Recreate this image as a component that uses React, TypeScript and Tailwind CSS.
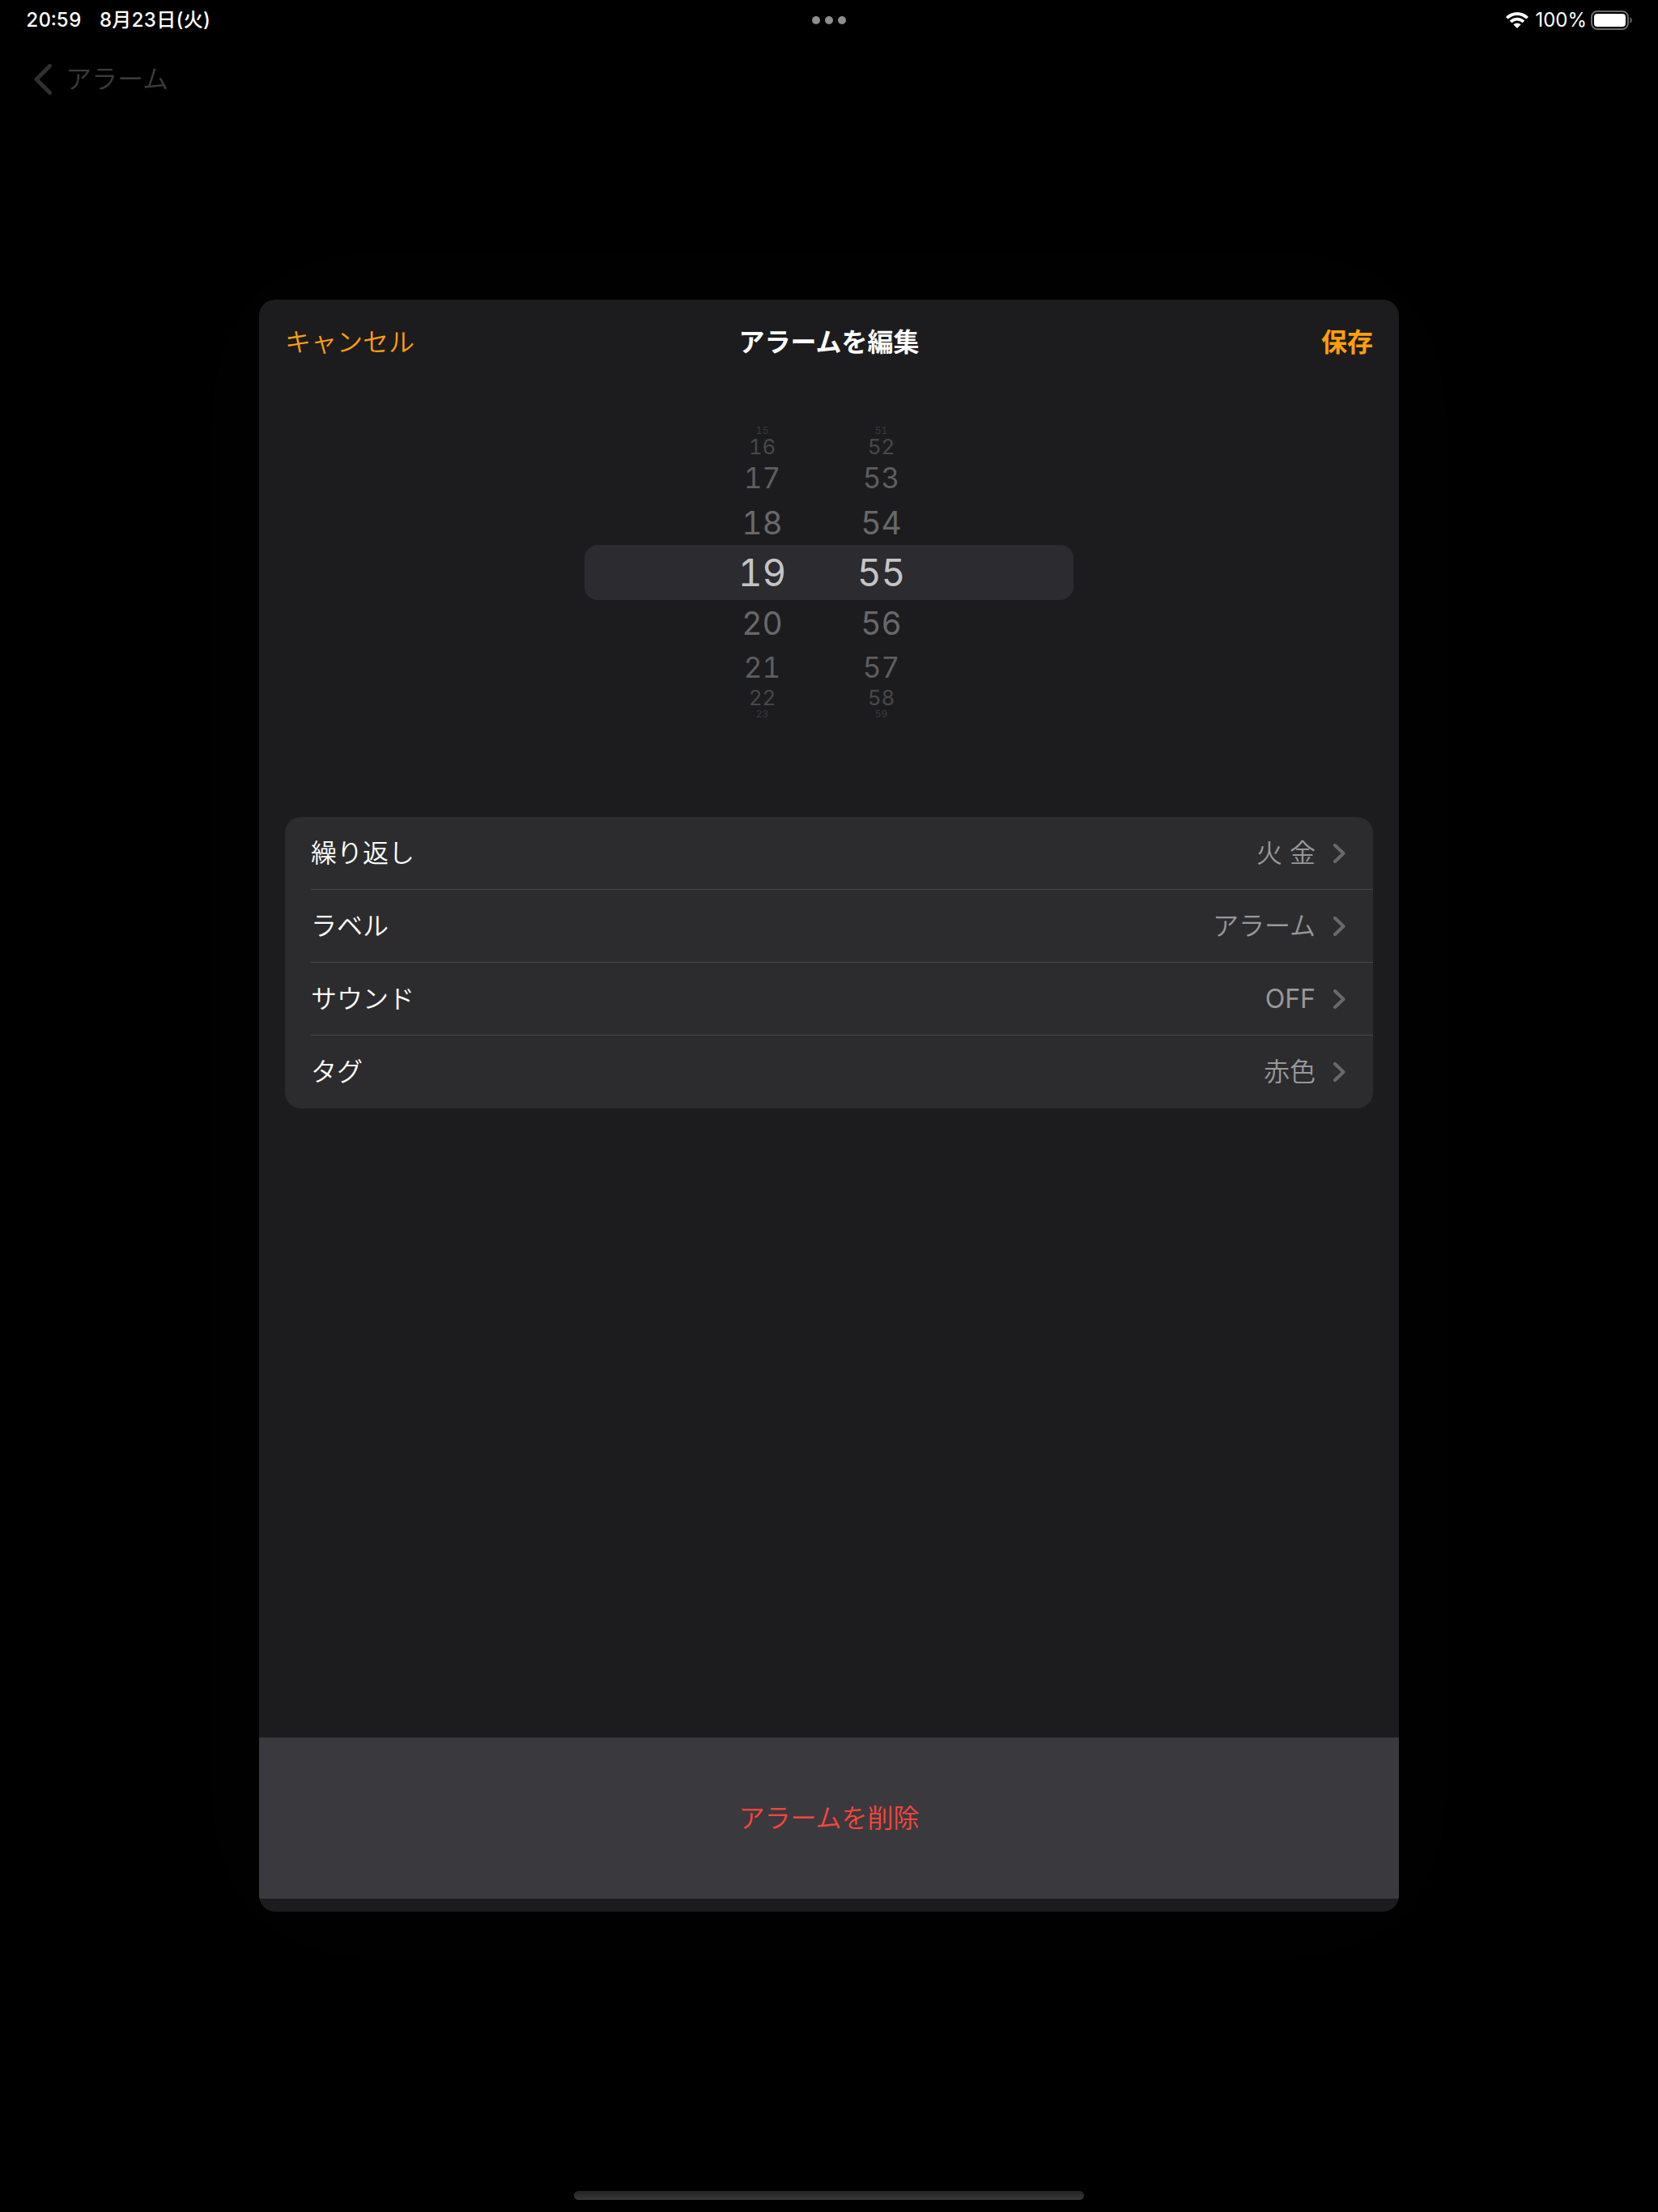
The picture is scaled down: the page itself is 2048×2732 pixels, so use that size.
import React from "react";

type Tier = { row: string; text: string };

const TIERS: Tier[] = [
  { row: "h-[12px] mb-[3px]", text: "text-[12px] text-[#39393b]" },
  { row: "h-[22px]", text: "text-[26px] text-[#48484a]" },
  { row: "h-[54px]", text: "text-[35px] text-[#5e5e60]" },
  { row: "h-[56px]", text: "text-[39px] text-[#68686b]" },
  { row: "h-[68px]", text: "text-[46px] text-[#c4c4c6]" },
  { row: "h-[56px]", text: "text-[39px] text-[#68686b]" },
  { row: "h-[54px]", text: "text-[35px] text-[#5e5e60]" },
  { row: "h-[22px]", text: "text-[26px] text-[#48484a]" },
  { row: "h-[12px] mt-[3px]", text: "text-[12px] text-[#39393b]" },
];

const HOURS = [15, 16, 17, 18, 19, 20, 21, 22, 23];
const MINUTES = [51, 52, 53, 54, 55, 56, 57, 58, 59];

const SETTINGS = [
  { label: "繰り返し", value: "火 金" },
  { label: "ラベル", value: "アラーム" },
  { label: "サウンド", value: "OFF" },
  { label: "タグ", value: "赤色" },
];

function Wheel({ name, values }: { name: string; values: number[] }) {
  return (
    <div role="listbox" aria-label={name} className="flex w-[94px] flex-col tabular-nums">
      {values.map((v, i) => (
        <button
          key={v}
          type="button"
          role="option"
          aria-selected={i === 4}
          className={`flex items-center justify-center leading-none ${TIERS[i].row} ${TIERS[i].text}`}
        >
          {v}
        </button>
      ))}
    </div>
  );
}

function StatusBar() {
  return (
    <header className="grid h-[50px] grid-cols-3 items-center px-8 text-[24px] leading-none font-medium text-white">
      <div className="flex items-center gap-[22px] tabular-nums">
        <span>20:59</span>
        <span>8月23日(火)</span>
      </div>
      <button type="button" aria-label="マルチタスク" className="flex justify-center gap-[6px]">
        <span className="size-[10px] rounded-full bg-[#8e8e8e]" />
        <span className="size-[10px] rounded-full bg-[#8e8e8e]" />
        <span className="size-[10px] rounded-full bg-[#8e8e8e]" />
      </button>
      <div className="flex items-center justify-end">
        <svg className="mr-2 h-5 w-7" viewBox="0 0 28 20" aria-hidden="true">
          <path d="M0 5.9 A19.8 19.8 0 0 1 28 5.9 L25.3 8.6 A16 16 0 0 0 2.7 8.6 Z" fill="#fff" />
          <path d="M4.7 10.6 A13.2 13.2 0 0 1 23.3 10.6 L20.6 13.3 A9.4 9.4 0 0 0 7.4 13.3 Z" fill="#fff" />
          <path d="M9.4 15.3 A6.6 6.6 0 0 1 18.6 15.3 L14 20 Z" fill="#fff" />
        </svg>
        <span className="font-normal">100%</span>
        <svg className="ml-[5px] h-6 w-[51px]" viewBox="0 0 51 24" fill="none" aria-hidden="true">
          <rect x="1" y="1" width="45" height="22" rx="7" stroke="#6a6a6a" strokeWidth="2" />
          <rect x="4" y="4" width="39" height="16" rx="4" fill="#fff" />
          <path d="M48.5 8 C51.5 9.5 51.5 14.5 48.5 16 Z" fill="#6a6a6a" />
        </svg>
      </div>
    </header>
  );
}

export default function App() {
  return (
    <div className="flex min-h-screen flex-col bg-black font-['Inter','Noto_Sans_CJK_JP',sans-serif] text-[32px] leading-none">
      <StatusBar />
      <nav className="flex h-[320px] items-start pt-[28px] pl-10">
        <button type="button" className="flex items-center gap-[17px] font-[350] text-[#3c3c3c]">
          <svg className="h-[40px] w-6" viewBox="0 0 24 40" fill="none" aria-hidden="true">
            <path d="M21.5 3.5 L5 20 L21.5 36.5" stroke="#303030" strokeWidth="5" strokeLinecap="round" strokeLinejoin="round" />
          </svg>
          アラーム
        </button>
      </nav>

      <main
        role="dialog"
        aria-labelledby="dialog-title"
        className="mx-auto flex w-full max-w-[1408px] flex-1 flex-col overflow-hidden rounded-[20px] bg-[#1c1c1e] pb-4 shadow-[0_0_200px_60px_#010200]"
      >
        <div className="grid h-[106px] grid-cols-3 items-center px-8">
          <button type="button" className="justify-self-start font-[350] text-[#ff9f0a]">キャンセル</button>
          <h1 id="dialog-title" className="justify-self-center font-bold text-white">アラームを編集</h1>
          <button type="button" className="justify-self-end font-bold text-[#ff9f0a]">保存</button>
        </div>

        <section aria-label="時刻" className="mt-[50px] grid justify-items-center">
          <div className="col-start-1 row-start-1 h-[68px] w-full max-w-[604px] self-center rounded-2xl bg-[#2c2b30]" />
          <div className="col-start-1 row-start-1 flex gap-[53px] pr-[18px]">
            <Wheel name="時" values={HOURS} />
            <Wheel name="分" values={MINUTES} />
          </div>
        </section>

        <ul className="mx-8 mt-[121px] rounded-[20px] bg-[#2c2c2e] pb-px pl-8">
          {SETTINGS.map((s, i) => (
            <li key={s.label} className={i < SETTINGS.length - 1 ? "border-b border-[#464649]" : ""}>
              <button type="button" className="flex h-[89px] w-full items-center pr-[34px] text-left">
                <span className="flex-1 font-[350] text-white">{s.label}</span>
                <span className={s.value === "OFF" ? "text-[#98989b]" : "font-[350] text-[#98989b]"}>{s.value}</span>
                <svg className="ml-[22px] h-6 w-[15px]" viewBox="0 0 15 24" fill="none" aria-hidden="true">
                  <path d="M2 2 L12.5 12 L2 22" stroke="#69696c" strokeWidth="4" strokeLinecap="round" strokeLinejoin="round" />
                </svg>
              </button>
            </li>
          ))}
        </ul>

        <button type="button" className="mt-auto h-[199px] w-full bg-[#3a393e] font-[350] text-[#ff453a]">
          アラームを削除
        </button>
      </main>

      <footer className="flex h-[371px] items-end justify-center pb-[15px]">
        <div className="h-[11px] w-full max-w-[630px] rounded-full bg-linear-to-b from-[#242424] to-[#383838]" />
      </footer>
    </div>
  );
}
